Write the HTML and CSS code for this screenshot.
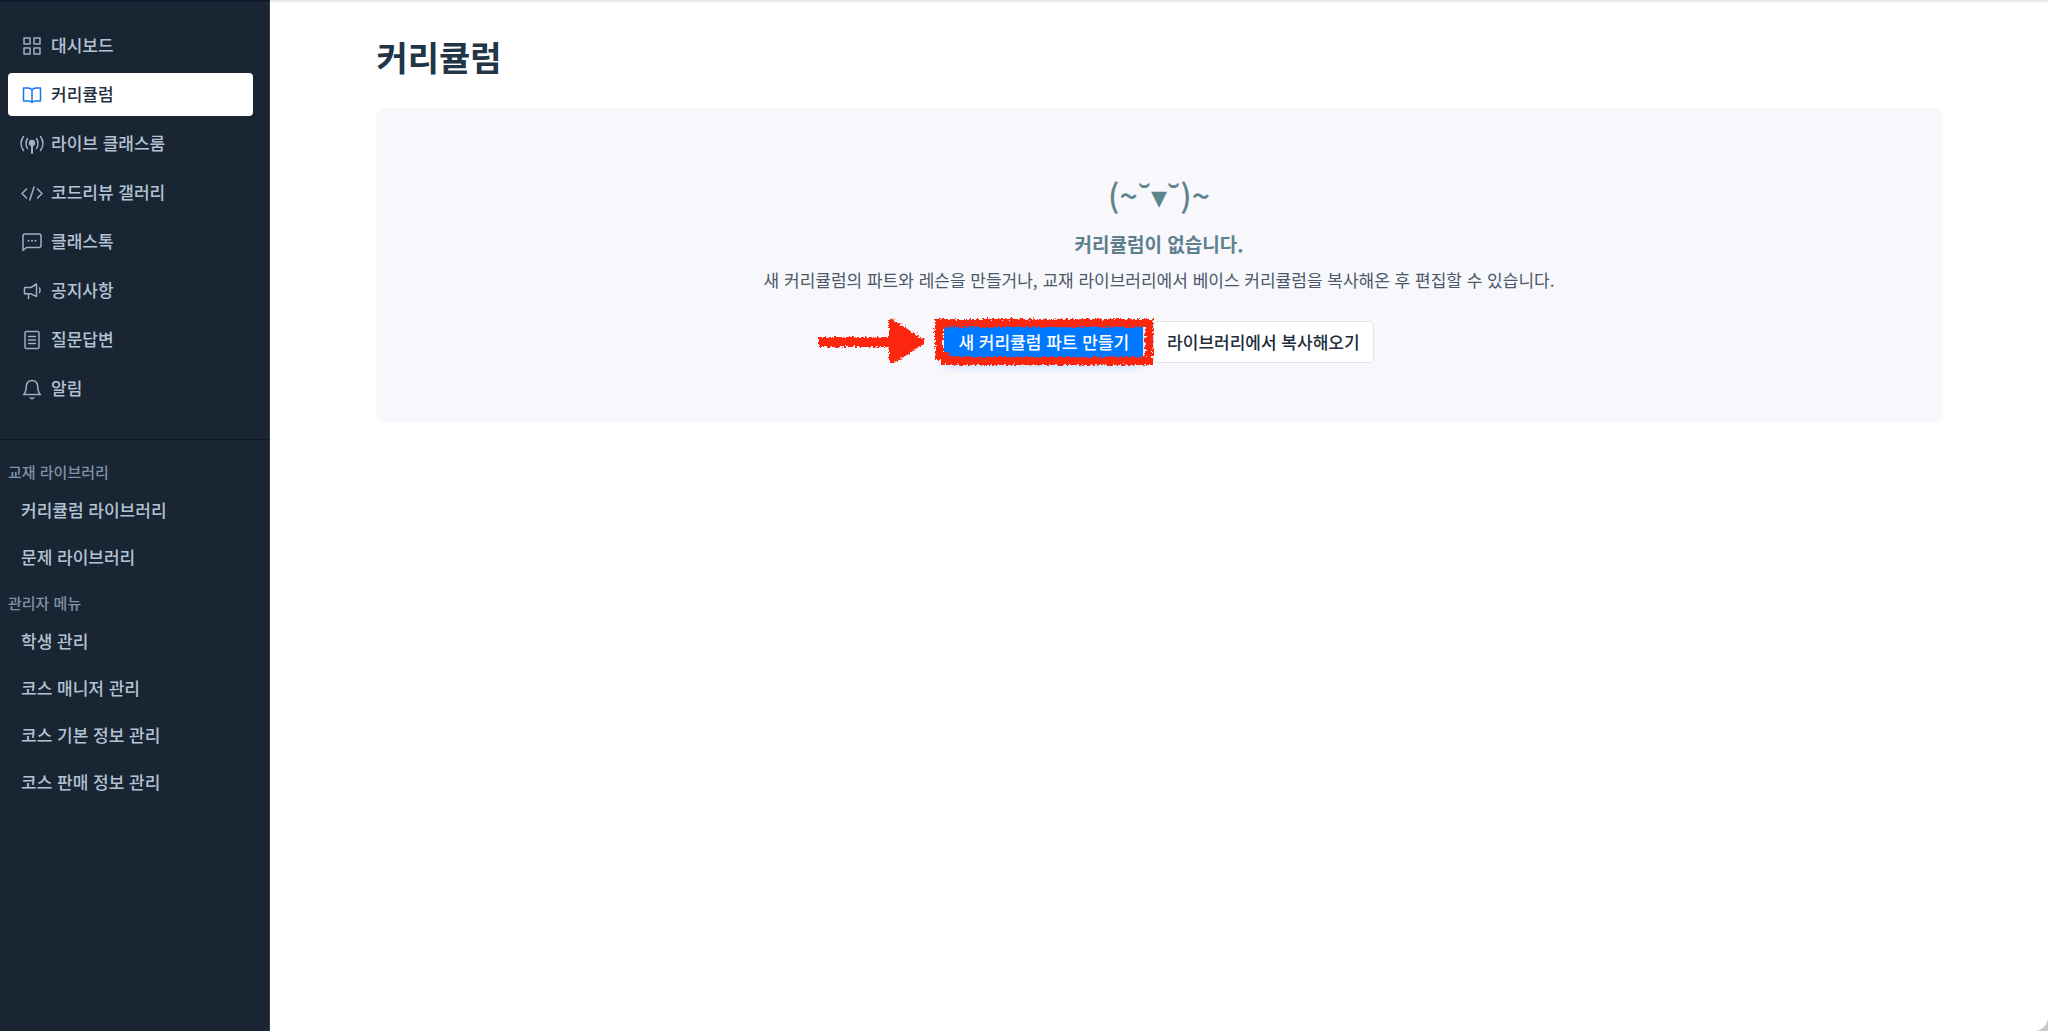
FILE: index.html
```
<!DOCTYPE html>
<html lang="ko">
<head>
    <meta charset="UTF-8">
    <title>커리큘럼</title>
    <link rel="stylesheet" href="styles.css">
</head>
<body>
    <div class="app">
        <aside class="sidebar">
            <nav class="menu">
                <a href="#">
                    <svg viewBox="0 0 24 24"><path d="M4 4h6v6H4zM14 4h6v6H14zM4 14h6v6H4zM14 14h6v6H14z"/></svg>
                    대시보드
                </a>
                <a href="#" class="active">
                    <svg viewBox="0 0 24 24"><path d="M12 7C11 5.500 9.500 5 8 5H3.500V18H8.500C10.500 18 11.500 18.500 12 19.500C12.500 18.500 13.500 18 15.500 18H20.500V5H16C14.500 5 13 5.500 12 7ZM12 7V19.500"/></svg>
                    커리큘럼
                </a>
                <a href="#">
                    <svg viewBox="0 0 24 24"><circle class="fill" cx="12" cy="11" r="3.2"/><path class="thick" d="M12 12v9"/><path d="M7.500 6.500Q4.500 11.500 7.500 16.500M16.500 6.500Q19.500 11.500 16.500 16.500M3.500 4.500Q-1.500 11.500 3.500 18.500M20.500 4.500Q25.500 11.500 20.500 18.500"/></svg>
                    라이브 클래스룸
                </a>
                <a href="#">
                    <svg viewBox="0 0 24 24"><path d="M6.500 8L2 12.500L6.500 17M17.500 8L22 12.500L17.500 17M14 6L9.800 19"/></svg>
                    코드리뷰 갤러리
                </a>
                <a href="#">
                    <svg viewBox="0 0 24 24"><path d="M3 20.500V6Q3 4 5 4H19Q21 4 21 6V15.500Q21 17.500 19 17.500H6.500Z"/><path class="dots" d="M8.500 10.800h.1M12 10.800h.1M15.500 10.800h.1"/></svg>
                    클래스톡
                </a>
                <a href="#">
                    <svg viewBox="0 0 24 24"><path d="M4.500 8.500H11L16.500 5V17.500L11 14.800H4.500ZM8.500 15V19.500M19.500 9Q20.800 11 19.500 13.500"/></svg>
                    공지사항
                </a>
                <a href="#">
                    <svg viewBox="0 0 24 24"><rect x="5" y="3.500" width="14" height="17" rx="1.500"/><path d="M8.500 8.500h7M8.500 12h7M8.500 15.500h7"/></svg>
                    질문답변
                </a>
                <a href="#">
                    <svg viewBox="0 0 24 24"><path d="M3.500 17.500C6 15.500 6 13 6.300 9.500C6.600 5.500 9 3.500 12 3.500C15 3.500 17.400 5.500 17.700 9.500C18 13 18 15.500 20.500 17.500ZM10.200 20.800Q12 22.500 13.800 20.800"/></svg>
                    알림
                </a>
            </nav>
            <nav class="submenu">
                <h2>교재 라이브러리</h2>
                <a href="#">커리큘럼 라이브러리</a>
                <a href="#">문제 라이브러리</a>
                <h2>관리자 메뉴</h2>
                <a href="#">학생 관리</a>
                <a href="#">코스 매니저 관리</a>
                <a href="#">코스 기본 정보 관리</a>
                <a href="#">코스 판매 정보 관리</a>
            </nav>
        </aside>
        <main class="content">
            <h1>커리큘럼</h1>
            <section class="empty">
                <div class="face">(~˘<span class="mouth">▾</span>˘)~</div>
                <h3>커리큘럼이 없습니다.</h3>
                <p>새 커리큘럼의 파트와 레슨을 만들거나, 교재 라이브러리에서 베이스 커리큘럼을 복사해온 후 편집할 수 있습니다.</p>
                <div class="actions">
                    <div class="marked">
                        <button class="btn primary">새 커리큘럼 파트 만들기</button>
                        <!-- hand-drawn marker: arrow + box around the button -->
                        <svg class="marker" viewBox="0 0 344 56" aria-hidden="true">
                            <filter id="rough" x="-5%" y="-20%" width="110%" height="140%">
                                <feTurbulence type="fractalNoise" baseFrequency="0.45" numOctaves="2" seed="4"/>
                                <feDisplacementMap in="SourceGraphic" scale="6" xChannelSelector="R" yChannelSelector="G"/>
                            </filter>
                            <g filter="url(#rough)">
                                <path class="ink" d="M8 23H78V6Q80 3 84 7L112 25Q115 28 111 31L83 49Q78 52 78 47V33H8Z"/>
                                <path class="line" d="M128 9H338V47H134V42H128Z"/>
                            </g>
                        </svg>
                    </div>
                    <button class="btn">라이브러리에서 복사해오기</button>
                </div>
            </section>
        </main>
    </div>
</body>
</html>
```
FILE: styles.css
```
* {
    box-sizing: border-box;
}
body {
    margin: 0;
    background: #c9c9c9;
    font-family: "Noto Sans CJK KR", "Noto Sans", sans-serif;
    font-size: 17px;
    font-weight: 500;
}
h1, h2, h3, p {
    margin: 0;
}
.app {
    display: flex;
    min-height: 100vh;
    background: #fff;
    border-bottom-right-radius: 14px;
}
.sidebar {
    width: 270px;
    flex-shrink: 0;
    background: #1a2533;
    border-top: 2px solid #10192a;
    border-right: 1px solid #343a49;
}
.sidebar a {
    display: flex;
    align-items: center;
    color: #b3c3d3;
    text-decoration: none;
}
.menu {
    display: flex;
    flex-direction: column;
    gap: 6px;
    padding: 22px 16px 29px 8px;
    border-bottom: 1px solid #0e1827;
}
.menu a {
    height: 43px;
    padding: 0 12px 2px;
    gap: 7px;
    border-radius: 4px;
}
.menu a.active {
    background: #fff;
    color: #1f2f3f;
}
.menu svg {
    width: 24px;
    height: 24px;
    margin-top: 2px;
    overflow: visible;
    fill: none;
    stroke: #a0b0c1;
    stroke-width: 1.5;
    stroke-linejoin: round;
    stroke-linecap: round;
}
.menu .active svg {
    stroke: #1677ee;
}
.menu .fill {
    fill: #a0b0c1;
    stroke: none;
}
.menu .thick {
    stroke-width: 2;
}
.menu .dots {
    stroke-width: 2;
}
.submenu {
    padding: 9px 8px;
}
.submenu h2 {
    margin: 12px 0 3px;
    font-size: 15px;
    line-height: 22px;
    font-weight: 500;
    color: #7e92a5;
}
.submenu a {
    height: 47px;
    padding: 0 13px;
}
.content {
    flex: 1;
    padding: 31px 5.2%;
    border-top: 2px solid #e8eaec;
}
h1 {
    font-size: 34px;
    line-height: 48px;
    font-weight: 700;
    color: #213547;
}
.empty {
    display: flex;
    flex-direction: column;
    align-items: center;
    margin-top: 27px;
    padding: 60px 24px;
    border-radius: 8px;
    background: #f7f7fc;
    text-align: center;
}
.face {
    font-size: 32px;
    line-height: 52px;
    font-weight: 500;
    color: #5d838c;
}
.mouth {
    font-family: "DejaVu Sans", sans-serif;
    line-height: 1;
}
.empty h3 {
    margin-top: 10px;
    font-size: 19px;
    line-height: 28px;
    font-weight: 700;
    color: #5d808d;
}
.empty p {
    margin-top: 10px;
    line-height: 24px;
    font-weight: 400;
    color: #4b5768;
}
.actions {
    display: flex;
    gap: 10px;
    margin-top: 29px;
}
.marked {
    position: relative;
}
.btn {
    height: 42px;
    padding: 0 13px 2px;
    border: 1px solid #e2e6ec;
    border-radius: 4px;
    background: #fff;
    color: #212c3b;
    font: inherit;
    cursor: pointer;
}
.btn.primary {
    border-color: #0078ff;
    background: #0078ff;
    color: #fff;
    box-shadow: 0 4px 6px rgba(0, 110, 255, 0.2);
}
.marker {
    position: absolute;
    right: -12px;
    top: -7px;
    width: 344px;
    height: 56px;
    pointer-events: none;
}
.marker .ink {
    fill: #fb2808;
}
.marker .line {
    fill: none;
    stroke: #fb2808;
    stroke-width: 8;
}
```
